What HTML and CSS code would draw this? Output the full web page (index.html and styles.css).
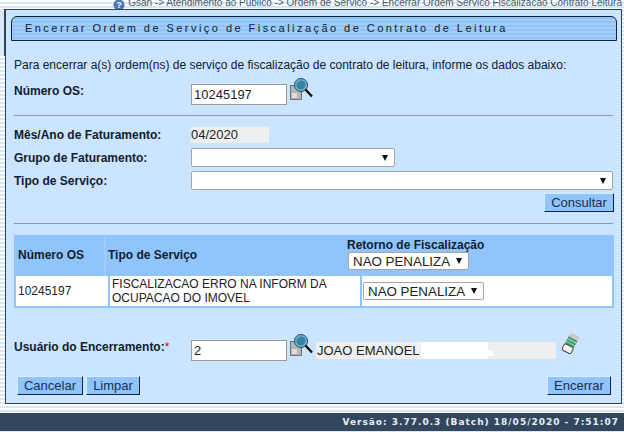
FILE: index.html
```html
<!DOCTYPE html>
<html lang="pt-BR">
<head>
    <meta charset="UTF-8">
    <title>Encerrar Ordem de Serviço</title>
    <link rel="stylesheet" href="styles.css">
</head>
<body>
    <div class="breadcrumb">
        <svg class="help-icon" width="12" height="12" viewBox="0 0 12 12"><circle cx="6" cy="6" r="5.5" fill="#4a78b8"/><text x="6" y="9" font-size="9" font-weight="bold" font-family="Liberation Sans" text-anchor="middle" fill="#fff">?</text></svg>
        <span>Gsan -&gt; Atendimento ao Publico -&gt; Ordem de Servico -&gt; Encerrar Ordem Servico Fiscalizacao Contrato Leitura</span>
    </div>

    <div class="main">
        <div class="side"><div class="side-mark"></div></div>
        <form class="panel">
            <h1 class="title">Encerrar Ordem de Serviço de Fiscalização de Contrato de Leitura</h1>

            <p class="intro">Para encerrar a(s) ordem(ns) de serviço de fiscalização de contrato de leitura, informe os dados abaixo:</p>

            <div class="row row-os">
                <label class="label">Número OS:</label>
                <input type="text" class="input" value="10245197">
                <svg class="lookup" width="24" height="22" viewBox="0 0 24 22">
                    <rect x="1.5" y="7.5" width="11" height="14" fill="#b5b5b5" stroke="#707070"/>
                    <rect x="3" y="15" width="5" height="5" fill="#dcdcdc"/>
                    <circle cx="12" cy="7" r="5.5" fill="#3f7f9f" stroke="#6fb4d8" stroke-width="2"/>
                    <circle cx="12" cy="7" r="6.5" fill="none" stroke="#17506c"/>
                    <path d="M16.5 11.5 L23 18.5" stroke="#111" stroke-width="2.4"/>
                </svg>
            </div>

            <hr class="line line-first">

            <div class="row row-month">
                <label class="label">Mês/Ano de Faturamento:</label>
                <span class="readonly readonly-month">04/2020</span>
            </div>
            <div class="row row-select">
                <label class="label">Grupo de Faturamento:</label>
                <span class="select-wrap"><select class="combo combo-group"><option></option></select></span>
            </div>
            <div class="row row-select">
                <label class="label">Tipo de Serviço:</label>
                <span class="select-wrap"><select class="combo combo-type"><option></option></select></span>
            </div>
            <div class="right-row">
                <button type="button" class="button button-query">Consultar</button>
            </div>

            <hr class="line line-second">

            <div class="grid">
                <div class="grid-head">
                    <div class="col-os">Número OS</div>
                    <div class="col-type">Tipo de Serviço</div>
                    <div class="col-return">
                        <div class="return-title">Retorno de Fiscalização</div>
                        <span class="select-wrap"><select class="combo combo-small"><option>NAO PENALIZA</option></select></span>
                    </div>
                </div>
                <div class="grid-row">
                    <div class="cell">10245197</div>
                    <div class="cell">FISCALIZACAO ERRO NA INFORM DA OCUPACAO DO IMOVEL</div>
                    <div class="cell">
                        <span class="select-wrap"><select class="combo combo-small"><option>NAO PENALIZA</option></select></span>
                    </div>
                </div>
            </div>

            <div class="row row-user">
                <label class="label">Usuário do Encerramento:<span class="required">*</span></label>
                <input type="text" class="input" value="2">
                <svg class="lookup" width="24" height="22" viewBox="0 0 24 22">
                    <rect x="1.5" y="7.5" width="11" height="14" fill="#b5b5b5" stroke="#707070"/>
                    <rect x="3" y="15" width="5" height="5" fill="#dcdcdc"/>
                    <circle cx="12" cy="7" r="5.5" fill="#3f7f9f" stroke="#6fb4d8" stroke-width="2"/>
                    <circle cx="12" cy="7" r="6.5" fill="none" stroke="#17506c"/>
                    <path d="M16.5 11.5 L23 18.5" stroke="#111" stroke-width="2.4"/>
                </svg>
                <span class="readonly readonly-name">JOAO EMANOEL<span class="hidden-name"></span></span>
                <svg class="eraser" width="19" height="21" viewBox="0 0 19 21">
                    <g transform="rotate(28 9.5 10.5)">
                        <rect x="4.5" y="0.5" width="10" height="5" fill="#c9c9c9"/>
                        <rect x="4.5" y="5" width="10" height="8" fill="#3f9a6c"/>
                        <path d="M4.5 7.5 H14.5 M4.5 10.5 H14.5" stroke="#a8dcc0" stroke-width="1"/>
                        <rect x="4.5" y="13" width="10" height="7" rx="2" fill="#f6f6f6" stroke="#444"/>
                    </g>
                </svg>
            </div>

            <div class="actions">
                <div class="actions-left">
                    <button type="button" class="button button-cancel">Cancelar</button>
                    <button type="button" class="button button-clear">Limpar</button>
                </div>
                <button type="button" class="button button-close">Encerrar</button>
            </div>
        </form>
    </div>

    <div class="footer">Versão: 3.77.0.3 (Batch) 18/05/2020 - 7:51:07</div>
</body>
</html>
```

FILE: styles.css
```css
html, body {
    height: 100%;
}

body {
    margin: 0;
    overflow: hidden;
    font-family: "Liberation Sans", Arial, sans-serif;
    color: #10202f;
    background: repeating-linear-gradient(180deg, #ffffff 0, #ffffff 2px, #d5e6f6 2px, #d5e6f6 4px);
}

.breadcrumb {
    height: 9px;
    overflow: hidden;
    display: flex;
    justify-content: flex-end;
    align-items: flex-end;
    gap: 3px;
    padding-right: 2px;
    font-size: 10px;
    line-height: 12px;
    color: #4a5a6a;
    white-space: nowrap;
}

.help-icon {
    flex: none;
    margin-bottom: -2px;
}

.main {
    display: flex;
}

.side {
    width: 5px;
    flex: none;
}

.side-mark {
    height: 47px;
    background: #d9e9f8;
    border-right: 1px solid #33475c;
    box-sizing: border-box;
}

.panel {
    width: 617px;
    height: 395px;
    box-sizing: border-box;
    border: 1px solid #2f4254;
    background: #cbe4ff;
    padding: 6px 7px 0 5px;
}

.title {
    margin: 0 -3px 0 0;
    height: 25px;
    box-sizing: border-box;
    border: 1px solid #10263c;
    border-radius: 6px 6px 0 0;
    background: repeating-linear-gradient(180deg, #8fc3f7 0, #8fc3f7 2px, #a3cff9 2px, #a3cff9 4px);
    padding-left: 13px;
    font-size: 11px;
    font-weight: normal;
    line-height: 23px;
    letter-spacing: 2.46px;
    color: #10202f;
    white-space: nowrap;
}

.intro {
    margin: 17px 0 0 3px;
    font-size: 12px;
    line-height: 14px;
    white-space: nowrap;
}

.row {
    display: flex;
    align-items: center;
    padding-left: 3px;
}

.label {
    width: 177px;
    flex: none;
    font-size: 12px;
    font-weight: bold;
    color: #10202f;
}

.row-os {
    margin-top: 10px;
    height: 24px;
}

.row-os .label {
    margin-top: -7px;
}

.input {
    width: 96px;
    height: 21px;
    box-sizing: border-box;
    border: 1px solid #9a9a9a;
    padding: 1px 2px;
    font-family: "Liberation Sans", Arial, sans-serif;
    font-size: 13px;
    color: #222;
    background: #fff;
}

.lookup {
    flex: none;
    margin: -11px 0 0 2px;
}

.line {
    margin: 0 0 0 3px;
    width: 599px;
    height: 1px;
    border: 0;
    background: #8b98a5;
}

.line-first {
    margin-top: 9px;
}

.line-second {
    margin-top: 11px;
}

.row-month {
    margin-top: 10px;
    margin-bottom: 2px;
    height: 18px;
}

.readonly {
    background: #efefef;
    font-size: 13px;
    color: #222;
    box-sizing: border-box;
}

.readonly-month {
    width: 78px;
    height: 16px;
    line-height: 16px;
}

.row-select {
    height: 23px;
}

.select-wrap {
    position: relative;
    display: inline-flex;
}

.select-wrap::after {
    content: "";
    position: absolute;
    right: 7px;
    top: 50%;
    margin-top: -3px;
    border-top: 6px solid #111;
    border-left: 3.5px solid transparent;
    border-right: 3.5px solid transparent;
    pointer-events: none;
}

.combo {
    appearance: none;
    height: 19px;
    box-sizing: border-box;
    border: 1px solid #a5a5a5;
    border-radius: 2px;
    background: #fff;
    padding: 0 0 0 4px;
    font-family: "Liberation Sans", Arial, sans-serif;
    font-size: 13.33px;
    color: #222;
}

.combo-group {
    width: 204px;
}

.combo-type {
    width: 422px;
}

.combo-small {
    width: 121px;
    height: 18px;
}

.right-row {
    display: flex;
    justify-content: flex-end;
    margin-top: 1px;
}

.button {
    height: 19px;
    box-sizing: border-box;
    border: 1px solid;
    border-color: #d8ecff #0e2440 #0e2440 #d8ecff;
    background: #90c4fc;
    padding: 0;
    font-family: "Liberation Sans", Arial, sans-serif;
    font-size: 13px;
    line-height: 16px;
    color: #14304c;
}

.button-query {
    width: 70px;
}

.grid {
    margin: 11px 0 0 3px;
    width: 600px;
    height: 73px;
    background: #90c4fc;
}

.grid-head {
    display: grid;
    grid-template-columns: 88px 241px 1fr;
    height: 41px;
    padding-left: 4px;
    font-size: 12px;
    font-weight: bold;
    color: #10202f;
}

.col-os, .col-type {
    display: flex;
    align-items: center;
    padding-bottom: 2px;
    box-sizing: border-box;
}

.col-os {
    border-right: 2px solid #a0cdfd;
}

.col-type {
    padding-left: 2px;
}

.col-return {
    padding-top: 3px;
}

.return-title {
    height: 14px;
    line-height: 14px;
}

.col-return .select-wrap {
    margin-left: 1px;
}

.grid-row {
    display: grid;
    grid-template-columns: 92px 250px 250px;
    column-gap: 2px;
    height: 30px;
    padding: 0 2px;
}

.cell {
    display: flex;
    align-items: center;
    padding-left: 2px;
    background: #fff;
    font-size: 12px;
    line-height: 14px;
    color: #222;
}

.cell .select-wrap {
    margin-left: -1px;
}

.row-user {
    margin-top: 30px;
    height: 24px;
}

.row-user .label {
    margin-top: -7px;
}

.required {
    color: #d00;
    font-weight: normal;
}

.readonly-name {
    display: flex;
    align-items: center;
    width: 240px;
    height: 17px;
    margin-left: 3px;
    padding-left: 1px;
}

.hidden-name {
    position: relative;
    margin-left: 1px;
    width: 67px;
    height: 17px;
    background: #fff;
}

.hidden-name::after {
    content: "";
    position: absolute;
    left: 67px;
    top: 8px;
    width: 5px;
    height: 6px;
    background: #fff;
}

.eraser {
    flex: none;
    margin: -13px 0 0 5px;
}

.actions {
    display: flex;
    justify-content: space-between;
    margin: 14px 3px 0 6px;
}

.actions-left {
    display: flex;
    gap: 3px;
}

.button-cancel {
    width: 66px;
}

.button-clear {
    width: 54px;
}

.button-close {
    width: 64px;
}

.footer {
    margin-top: 9px;
    height: 18px;
    background: #33475c;
    padding-right: 5px;
    font-family: "DejaVu Sans", sans-serif;
    font-size: 9px;
    font-weight: bold;
    line-height: 18px;
    letter-spacing: 1px;
    color: #e8eef4;
    text-align: right;
    white-space: nowrap;
}
```
